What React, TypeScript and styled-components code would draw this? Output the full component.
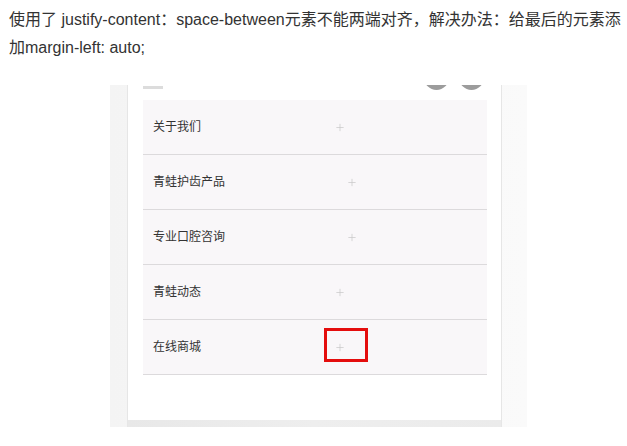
import styled, { createGlobalStyle } from "styled-components";

const GlobalStyle = createGlobalStyle`
  html, body {
    margin: 0;
    padding: 0;
    background: #ffffff;
  }
`;

const Page = styled.div`
  width: 627px;
  height: 446px;
  overflow: hidden;
  padding: 6px 0 0 9px;
  box-sizing: border-box;
  font-family: "Liberation Sans", "Noto Sans CJK SC", sans-serif;
`;

const Paragraph = styled.p`
  margin: 0;
  width: 612px;
  font-size: 16px;
  line-height: 28px;
  color: #333333;
`;

const Shot = styled.div`
  margin: 23px 0 0 101px;
  width: 417px;
  height: 342px;
  display: flex;
  background: linear-gradient(90deg, #f4f4f4 0%, #fafafa 100%);
`;

const Gutter = styled.div<{ $w: number }>`
  width: ${(p) => p.$w}px;
  flex-shrink: 0;
`;

const Phone = styled.div`
  width: 375px;
  display: flex;
  flex-direction: column;
  background: #ffffff;
  border-left: 1px solid #e6e6e6;
  border-right: 1px solid #e6e6e6;
  box-sizing: border-box;
`;

const TopBar = styled.div`
  height: 15px;
  padding: 0 17px 0 15px;
  display: flex;
  justify-content: space-between;
  align-items: flex-start;
  overflow: hidden;
`;

const Dash = styled.div`
  width: 20px;
  height: 3px;
  margin-top: 1px;
  background: #dcdcdc;
`;

const Circles = styled.div`
  display: flex;
  gap: 10px;
  margin-top: -20px;
`;

const Circle = styled.div`
  width: 25px;
  height: 25px;
  border-radius: 50%;
  background: #9c9c9c;
`;

const Menu = styled.ul`
  list-style: none;
  margin: 0 0 0 15px;
  padding: 0;
  width: 344px;
  background: #f9f7f9;
`;

const Item = styled.li`
  height: 54px;
  padding-left: 10px;
  display: flex;
  align-items: center;
  justify-content: space-between;
  border-bottom: 1px solid #dcdadc;
  font-size: 12px;
  color: #333333;
`;

const Label = styled.span`
  line-height: 16px;
`;

const PlusWrap = styled.span`
  position: relative;
  width: 8px;
  height: 10px;
  display: flex;
  align-items: center;
  justify-content: center;
`;

const Mark = styled.span`
  position: absolute;
  left: -12px;
  top: -14px;
  width: 38px;
  height: 28px;
  border: 3px solid #e40d0d;
`;

const Spacer = styled.span`
  width: 8px;
`;

const Bottom = styled.div`
  flex: 1;
  display: flex;
  flex-direction: column;
  justify-content: flex-end;
`;

const BottomBar = styled.div`
  height: 7px;
  background: linear-gradient(90deg, #e8e8e8 0%, #eeeeee 50%, #ebebeb 100%);
`;

const Plus = () => (
  <svg width="11" height="11" viewBox="0 0 11 11">
    <path d="M5.5 0.5v10M0.5 5.5h10" stroke="#c8c8c8" strokeWidth="1" />
  </svg>
);

const items = ["关于我们", "青蛙护齿产品", "专业口腔咨询", "青蛙动态", "在线商城"];

export default function App() {
  return (
    <Page>
      <GlobalStyle />
      <Paragraph>
        使用了 justify-content：space-between元素不能两端对齐，解决办法：给最后的元素添加margin-left: auto;
      </Paragraph>
      <Shot>
        <Gutter $w={17} />
        <Phone>
          <TopBar>
            <Dash />
            <Circles>
              <Circle />
              <Circle />
            </Circles>
          </TopBar>
          <Menu>
            {items.map((name, i) => (
              <Item key={name}>
                <Label>{name}</Label>
                <PlusWrap>
                  <Plus />
                  {i === items.length - 1 ? <Mark /> : null}
                </PlusWrap>
                <Spacer />
              </Item>
            ))}
          </Menu>
          <Bottom>
            <BottomBar />
          </Bottom>
        </Phone>
        <Gutter $w={25} />
      </Shot>
    </Page>
  );
}
